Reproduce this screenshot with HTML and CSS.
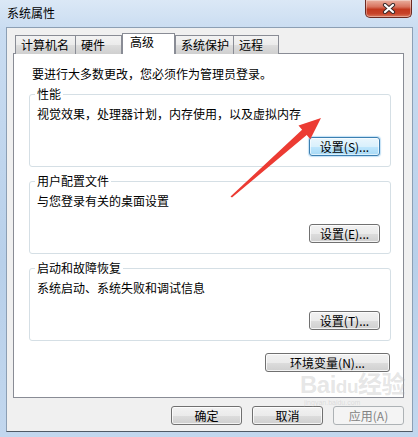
FILE: index.html
```html
<!DOCTYPE html>
<html lang="zh-CN">
<head>
<meta charset="utf-8">
<title>系统属性</title>
<link rel="stylesheet" href="styles.css">
</head>
<body>
<div class="window">
  <div class="titlebar">
    <span class="title">系统属性</span>
    <button class="close" aria-label="关闭">
      <svg width="14" height="11" viewBox="0 0 14 11">
        <path d="M3 2 L11 9 M11 2 L3 9" stroke="#3a2a2a" stroke-width="4.2" stroke-linecap="round"/>
        <path d="M3 2 L11 9 M11 2 L3 9" stroke="#ffffff" stroke-width="2.2" stroke-linecap="round"/>
      </svg>
    </button>
  </div>
  <div class="client">
    <div class="tabs">
      <div class="tab">计算机名</div>
      <div class="tab">硬件</div>
      <div class="tab active">高级</div>
      <div class="tab">系统保护</div>
      <div class="tab">远程</div>
    </div>
    <div class="panel">
      <p class="note">要进行大多数更改，您必须作为管理员登录。</p>
      <fieldset class="group">
        <legend>性能</legend>
        <p class="desc">视觉效果，处理器计划，内存使用，以及虚拟内存</p>
        <div class="row"><button class="btn focus">设置(<u>S</u>)...</button></div>
      </fieldset>
      <fieldset class="group">
        <legend>用户配置文件</legend>
        <p class="desc">与您登录有关的桌面设置</p>
        <div class="row"><button class="btn">设置(<u>E</u>)...</button></div>
      </fieldset>
      <fieldset class="group">
        <legend>启动和故障恢复</legend>
        <p class="desc">系统启动、系统失败和调试信息</p>
        <div class="row"><button class="btn">设置(<u>T</u>)...</button></div>
      </fieldset>
      <div class="row env"><button class="btn wide">环境变量(<u>N</u>)...</button></div>
    </div>
    <div class="actions">
      <button class="btn">确定</button>
      <button class="btn">取消</button>
      <button class="btn" disabled>应用(<u>A</u>)</button>
    </div>
  </div>
  <div class="watermark"><span class="wm-big">Bai<span class="wm-du">du</span>经验</span><span class="wm-small">jingyan.baidu.com</span></div>
  <svg class="arrow" viewBox="0 0 418 437" width="418" height="437">
    <polygon points="230.5,196.5 302.1,129.8 298.5,125.6 321,118 310.3,139.2 306.7,135.0 232,197.5" fill="#ec3b33"/>
  </svg>
</div>
</body>
</html>
```

FILE: styles.css
```css
* { box-sizing: border-box; }
html, body { margin: 0; padding: 0; }
body {
  width: 418px;
  height: 437px;
  overflow: hidden;
  font: 12px/16px "Noto Sans CJK SC", "Liberation Sans", sans-serif;
  color: #000;
}
p { margin: 0; }

.window {
  position: relative;
  width: 418px;
  height: 437px;
  padding: 0 5px 5px 6px;
  display: flex;
  flex-direction: column;
  background: linear-gradient(180deg, #dbe8f6 0%, #c9dcf1 30px, #b8d0ea 60%, #c2d7ee 100%);
}

.titlebar {
  height: 27px;
  display: flex;
  align-items: flex-start;
  flex: none;
}
.title {
  margin: 5px 0 0 1px;
  color: #000;
}
.close {
  margin-left: auto;
  margin-right: 1px;
  width: 47px;
  height: 18px;
  padding: 0;
  border: 1px solid #6b2a22;
  border-top: none;
  border-radius: 0 0 5px 5px;
  background: linear-gradient(180deg, #eab0a0 0%, #d8735e 40%, #c2391f 55%, #c7432a 80%, #db7a5e 100%);
  box-shadow: inset 0 0 0 1px rgba(255,255,255,0.35);
  display: flex;
  align-items: center;
  justify-content: center;
}

.client {
  flex: 1;
  background: #f0f0f0;
  border: 1px solid #8c9fb4;
  border-bottom-color: #4f5a66;
  padding: 5px 8px 0 6px;
  display: flex;
  flex-direction: column;
}

.tabs {
  display: flex;
  align-items: flex-end;
  padding-left: 2px;
  height: 21px;
  position: relative;
  z-index: 1;
  margin-bottom: -1px;
}
.tab {
  height: 19px;
  padding: 1px 0 0 5px;
  border: 1px solid #898c95;
  border-bottom: none;
  background: linear-gradient(180deg, #f3f3f3 0%, #ebebeb 50%, #dddddd 51%, #cfcfcf 100%);
  margin-left: -1px;
  white-space: nowrap;
}
.tab:first-child { margin-left: 0; width: 61px; }
.tab:nth-child(2) { width: 47px; }
.tab:nth-child(4) { width: 59px; }
.tab:nth-child(5) { width: 46px; }
.tab.active {
  width: 53px;
  height: 21px;
  padding: 0 0 0 7px;
  margin-left: 0;
  margin-right: 0;
  background: #fff;
  position: relative;
  z-index: 2;
}
.tab.active + .tab { margin-left: 0; }

.panel {
  height: 345px;
  background: #fff;
  border: 1px solid #898c95;
  padding: 12px 12px 0 15px;
  display: flex;
  flex-direction: column;
}
.note { margin-left: 3px; }

.group {
  margin: 5px 0 0 0;
  padding: 5px 10px 10px 7px;
  border: 1px solid #d5dfe5;
  border-radius: 3px;
  min-inline-size: 0;
}
.group + .group { margin-top: 7px; }
.group legend {
  padding: 0 2px;
  margin-left: -2px;
  line-height: 14px;
}
.row {
  display: flex;
  justify-content: flex-end;
  margin-top: 15px;
}
.env {
  margin-top: 12px;
  margin-right: 1px;
}

.btn {
  width: 71px;
  height: 19px;
  padding: 0;
  font: inherit;
  line-height: 15px;
  color: #000;
  border: 1px solid #707070;
  border-radius: 3px;
  background: linear-gradient(180deg, #f2f2f2 0%, #ebebeb 50%, #dddddd 51%, #cfcfcf 100%);
  box-shadow: inset 0 0 0 1px rgba(255,255,255,0.75);
  white-space: nowrap;
}
.btn u { text-decoration: none; }
.btn.wide { width: 125px; }
.btn.focus {
  border-color: #3c7fb1;
  background: linear-gradient(180deg, #eaf6fd 0%, #d9f0fc 50%, #bee6fd 51%, #a7d9f5 100%);
  box-shadow: inset 0 0 0 1px rgba(255,255,255,0.6), 0 0 1px 1px rgba(80,170,230,0.35);
}
.btn:disabled {
  border-color: #adb2b5;
  background: #f4f4f4;
  color: #838383;
  box-shadow: none;
}

.actions {
  display: flex;
  justify-content: flex-end;
  gap: 10px;
  margin-top: 8px;
}

.watermark {
  position: absolute;
  left: 300px;
  top: 373px;
  display: flex;
  flex-direction: column;
  pointer-events: none;
  color: rgba(170, 170, 170, 0.3);
  font-family: "Liberation Sans", "Noto Sans CJK SC", sans-serif;
}
.wm-big { font-size: 24px; line-height: 24px; font-weight: bold; letter-spacing: -0.5px; }
.wm-du { font-size: 19px; }
.wm-small { font-size: 7px; line-height: 8px; margin-left: 4px; }

.arrow {
  position: absolute;
  left: 0;
  top: 0;
  pointer-events: none;
}
```
